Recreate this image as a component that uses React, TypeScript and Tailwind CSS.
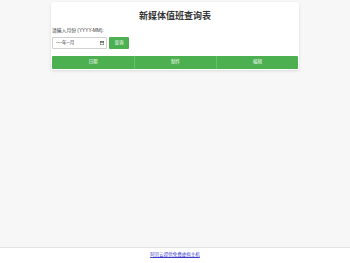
import React from "react";

export default function App() {
  const font = { fontFamily: '"Liberation Sans", "Noto Sans CJK SC", sans-serif' };
  return (
    <div className="flex min-h-[263px] w-[350px] flex-col" style={font}>
      <div className="h-[247px] bg-[#f7f7f7] pt-[2px]">
        <div className="mx-auto w-[248px] rounded-[3px] bg-white px-[1px] pb-[1px] shadow-[0_1px_3px_rgba(0,0,0,0.12)]">
          <h1 className="pt-[9px] text-center text-[9px] font-bold leading-[11px] text-[#333]">
            新媒体值班查询表
          </h1>
          <div className="mt-[6px] text-[4.8px] leading-[6px] text-[#333]">请输入月份 (YYYY-MM):</div>
          <div className="mt-[3px] flex items-center gap-[2px]">
            <div className="flex h-[12px] w-[55px] items-center justify-between rounded-[1px] border border-[#d0d0d0] bg-white pl-[3px] pr-[2px]">
              <span className="text-[4.6px] leading-none text-[#333]">----年--月</span>
              <svg width="4" height="4" viewBox="0 0 10 10">
                <rect x="0.5" y="1.5" width="9" height="8" fill="none" stroke="#444" strokeWidth="1.2" />
                <rect x="0.5" y="1.5" width="9" height="2.5" fill="#444" />
              </svg>
            </div>
            <div className="flex h-[12px] w-[20px] items-center justify-center rounded-[1px] bg-[#4caf50] text-[4.6px] leading-none text-white">
              查询
            </div>
          </div>
          <div className="mt-[7px] grid h-[13px] grid-cols-3 rounded-[1px] bg-[#4caf50] text-[4.5px] text-white">
            <div className="flex items-center justify-center">日期</div>
            <div className="flex items-center justify-center border-l border-[#6abf6d]">制作</div>
            <div className="flex items-center justify-center border-l border-[#6abf6d]">编辑</div>
          </div>
        </div>
      </div>
      <div className="flex h-[16px] items-center justify-center border-t border-[#e3e3e3] bg-white">
        <a href="#" className="text-[4.5px] leading-none text-[#3a3ad0] underline">
          阿贝云提供免费虚拟主机
        </a>
      </div>
    </div>
  );
}
